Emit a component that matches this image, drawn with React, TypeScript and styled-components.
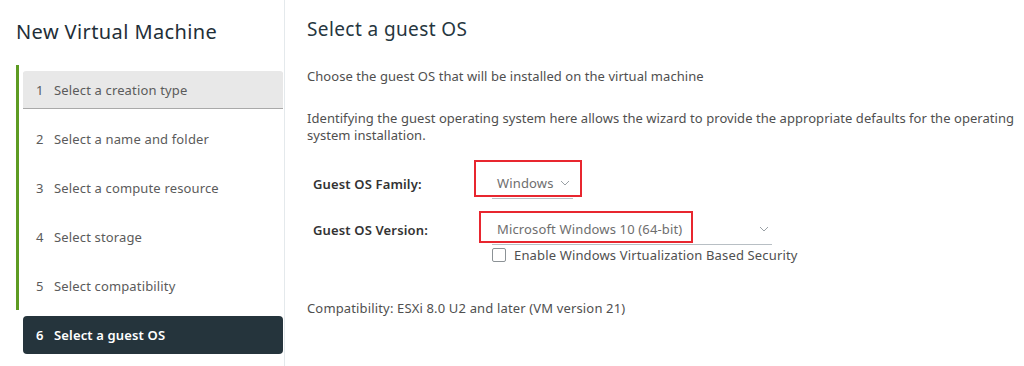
import React from 'react';
import styled, { createGlobalStyle } from 'styled-components';

const GlobalStyle = createGlobalStyle`
  html, body {
    margin: 0;
    padding: 0;
    background: #ffffff;
  }
  body {
    font-family: "Noto Sans", "Open Sans", sans-serif;
    letter-spacing: 0.15px;
  }
`;

const Page = styled.div`
  display: flex;
  width: 1024px;
  height: 366px;
  overflow: hidden;
  background: #ffffff;
`;

const Sidebar = styled.div`
  width: 285px;
  flex-shrink: 0;
  border-right: 1px solid #e4e9ec;
  box-sizing: border-box;
`;

const WizardTitle = styled.h1`
  margin: 0;
  padding: 18px 0 0 16px;
  height: 65px;
  box-sizing: border-box;
  font-size: 20px;
  font-weight: 400;
  color: #1f2f38;
  letter-spacing: 0.4px;
`;

const StepList = styled.div`
  padding-left: 16px;
`;

const StepRow = styled.div<{ $done?: boolean }>`
  height: 49px;
  box-sizing: border-box;
  display: flex;
  align-items: center;
  border-left: 3px solid ${p => (p.$done ? '#5d9b22' : 'transparent')};
  padding-left: 4px;
`;

const StepBox = styled.div<{ $state: 'visited' | 'current' | 'idle' }>`
  width: 260px;
  height: 37px;
  display: flex;
  align-items: center;
  padding-left: 13px;
  box-sizing: border-box;
  font-size: 13px;
  border-radius: 3px 3px 0 0;
  color: ${p => (p.$state === 'current' ? '#ffffff' : '#5b5b5b')};
  font-weight: ${p => (p.$state === 'current' ? 600 : 400)};
  background: ${p =>
    p.$state === 'visited' ? '#e8e8e8' : p.$state === 'current' ? '#25343c' : 'transparent'};
  box-shadow: ${p => (p.$state === 'visited' ? '0 1px 0 #a9a9a9' : 'none')};
  ${p => (p.$state === 'current' ? 'border-radius: 4px; height: 38px;' : '')}
`;

const StepNum = styled.span`
  width: 18px;
  flex-shrink: 0;
`;

const Main = styled.div`
  flex: 1;
  min-width: 0;
  padding: 16px 0 0 22px;
  color: #4f4f4f;
  font-size: 13px;
`;

const PageTitle = styled.h2`
  margin: 0 0 26px;
  font-size: 19px;
  font-weight: 400;
  color: #263640;
  letter-spacing: 0.4px;
`;

const Paragraph = styled.p<{ $gap?: number }>`
  margin: 0 0 ${p => p.$gap ?? 24}px;
  line-height: 17px;
  white-space: nowrap;
  letter-spacing: 0.05px;
`;

const Form = styled.div`
  display: flex;
  flex-direction: column;
  padding-left: 6px;
  margin-top: 3px;
`;

const FormRow = styled.div`
  display: flex;
  align-items: flex-start;
  position: relative;
`;

const Label = styled.label`
  width: 179px;
  font-weight: 600;
  color: #333333;
  padding-top: 7px;
`;

const Field = styled.div`
  display: flex;
  flex-direction: column;
`;

const Select = styled.div<{ $width: number }>`
  width: ${p => p.$width}px;
  height: 31px;
  box-sizing: border-box;
  border-bottom: 1px solid #b8bfc4;
  display: flex;
  align-items: center;
  justify-content: space-between;
  gap: 6px;
  padding: 0 3px 0 5px;
  color: #6e6e6e;
  font-size: 13px;
  white-space: nowrap;

  svg {
    flex-shrink: 0;
  }
`;

const Highlight = styled.div<{ $left: number; $top: number; $w: number; $h: number }>`
  position: absolute;
  left: ${p => p.$left}px;
  top: ${p => p.$top}px;
  width: ${p => p.$w}px;
  height: ${p => p.$h}px;
  border: 2px solid #e8262f;
  box-sizing: border-box;
  pointer-events: none;
`;

const CheckRow = styled.label`
  display: flex;
  align-items: center;
  gap: 8px;
  margin-top: 1px;
  color: #505050;
`;

const Box = styled.span`
  width: 14px;
  height: 14px;
  border: 1px solid #8c9296;
  border-radius: 2px;
  box-sizing: border-box;
`;

const Compat = styled.p`
  margin: 35px 0 0;
`;

const Chevron = () => (
  <svg width="10" height="6" viewBox="0 0 10 6" fill="none">
    <path d="M1 1l4 4 4-4" stroke="#9aa1a6" strokeWidth="1" />
  </svg>
);

const steps = [
  'Select a creation type',
  'Select a name and folder',
  'Select a compute resource',
  'Select storage',
  'Select compatibility',
  'Select a guest OS',
];

export default function App() {
  return (
    <Page>
      <GlobalStyle />
      <Sidebar>
        <WizardTitle>New Virtual Machine</WizardTitle>
        <StepList>
          {steps.map((s, i) => (
            <StepRow key={s} $done={i < 5}>
              <StepBox $state={i === 0 ? 'visited' : i === 5 ? 'current' : 'idle'}>
                <StepNum>{i + 1}</StepNum>
                {s}
              </StepBox>
            </StepRow>
          ))}
        </StepList>
      </Sidebar>
      <Main>
        <PageTitle>Select a guest OS</PageTitle>
        <Paragraph $gap={25}>Choose the guest OS that will be installed on the virtual machine</Paragraph>
        <Paragraph>
          Identifying the guest operating system here allows the wizard to provide the appropriate defaults for the operating
          <br />
          system installation.
        </Paragraph>
        <Form>
          <FormRow style={{ marginBottom: 15 }}>
            <Label>Guest OS Family:</Label>
            <Field>
              <Select $width={81}>
                Windows
                <Chevron />
              </Select>
            </Field>
            <Highlight $left={161} $top={-8} $w={108} $h={37} />
          </FormRow>
          <FormRow>
            <Label>Guest OS Version:</Label>
            <Field>
              <Select $width={280}>
                Microsoft Windows 10 (64-bit)
                <Chevron />
              </Select>
              <CheckRow>
                <Box />
                Enable Windows Virtualization Based Security
              </CheckRow>
            </Field>
            <Highlight $left={166} $top={-3} $w={214} $h={32} />
          </FormRow>
        </Form>
        <Compat>Compatibility: ESXi 8.0 U2 and later (VM version 21)</Compat>
      </Main>
    </Page>
  );
}
